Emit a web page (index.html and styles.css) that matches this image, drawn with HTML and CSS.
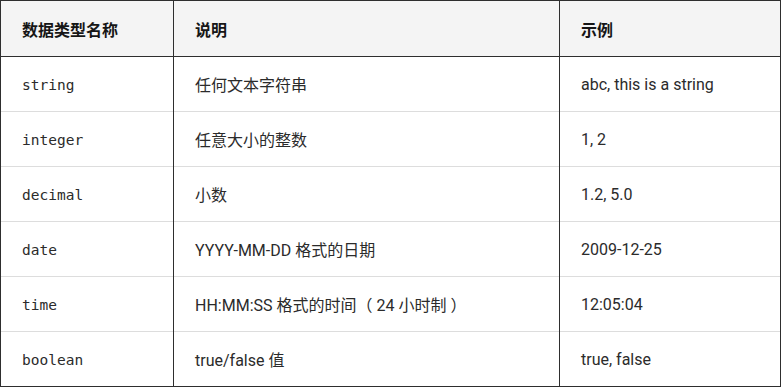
FILE: index.html
```html
<!DOCTYPE html>
<html lang="zh">
<head>
<meta charset="utf-8">
<link rel="stylesheet" href="styles.css">
</head>
<body>
<table class="types">
  <thead>
    <tr><th class="c1">数据类型名称</th><th class="c2">说明</th><th class="c3">示例</th></tr>
  </thead>
  <tbody>
    <tr><td><code>string</code></td><td>任何文本字符串</td><td>abc, this is a string</td></tr>
    <tr><td><code>integer</code></td><td>任意大小的整数</td><td>1, 2</td></tr>
    <tr><td><code>decimal</code></td><td>小数</td><td>1.2, 5.0</td></tr>
    <tr><td><code>date</code></td><td>YYYY-MM-DD 格式的日期</td><td>2009-12-25</td></tr>
    <tr><td><code>time</code></td><td>HH:MM:SS 格式的时间（ 24 小时制 ）</td><td>12:05:04</td></tr>
    <tr><td><code>boolean</code></td><td>true/false 值</td><td>true, false</td></tr>
  </tbody>
</table>
</body>
</html>
```
FILE: styles.css
```css
html, body {
  margin: 0;
  padding: 0;
  background: #ffffff;
}
.types {
  border-collapse: collapse;
  width: 781px;
  table-layout: fixed;
  font-family: Roboto, "Noto Sans CJK SC", sans-serif;
  font-size: 16px;
  color: #2b2b2b;
  border: 1px solid #2e2e2e;
}
.types th, .types td {
  text-align: left;
  padding: 0 0 0 21px;
  height: 54px;
  border-left: 1px solid #2e2e2e;
  border-right: 1px solid #2e2e2e;
  vertical-align: middle;
}
.types th {
  height: 55px;
  background: #f4f4f4;
  font-weight: 700;
  color: #161616;
  border-bottom: 1px solid #2e2e2e;
}
.types tbody tr {
  border-top: 1px solid #dddddd;
}
.types tbody tr:first-child {
  border-top: 1px solid #2e2e2e;
}
.c1 { width: 151px; }
.c2 { width: 364px; }
.types code {
  font-family: "DejaVu Sans Mono", monospace;
  font-size: 14.5px;
  color: #2b2b2b;
}
```
